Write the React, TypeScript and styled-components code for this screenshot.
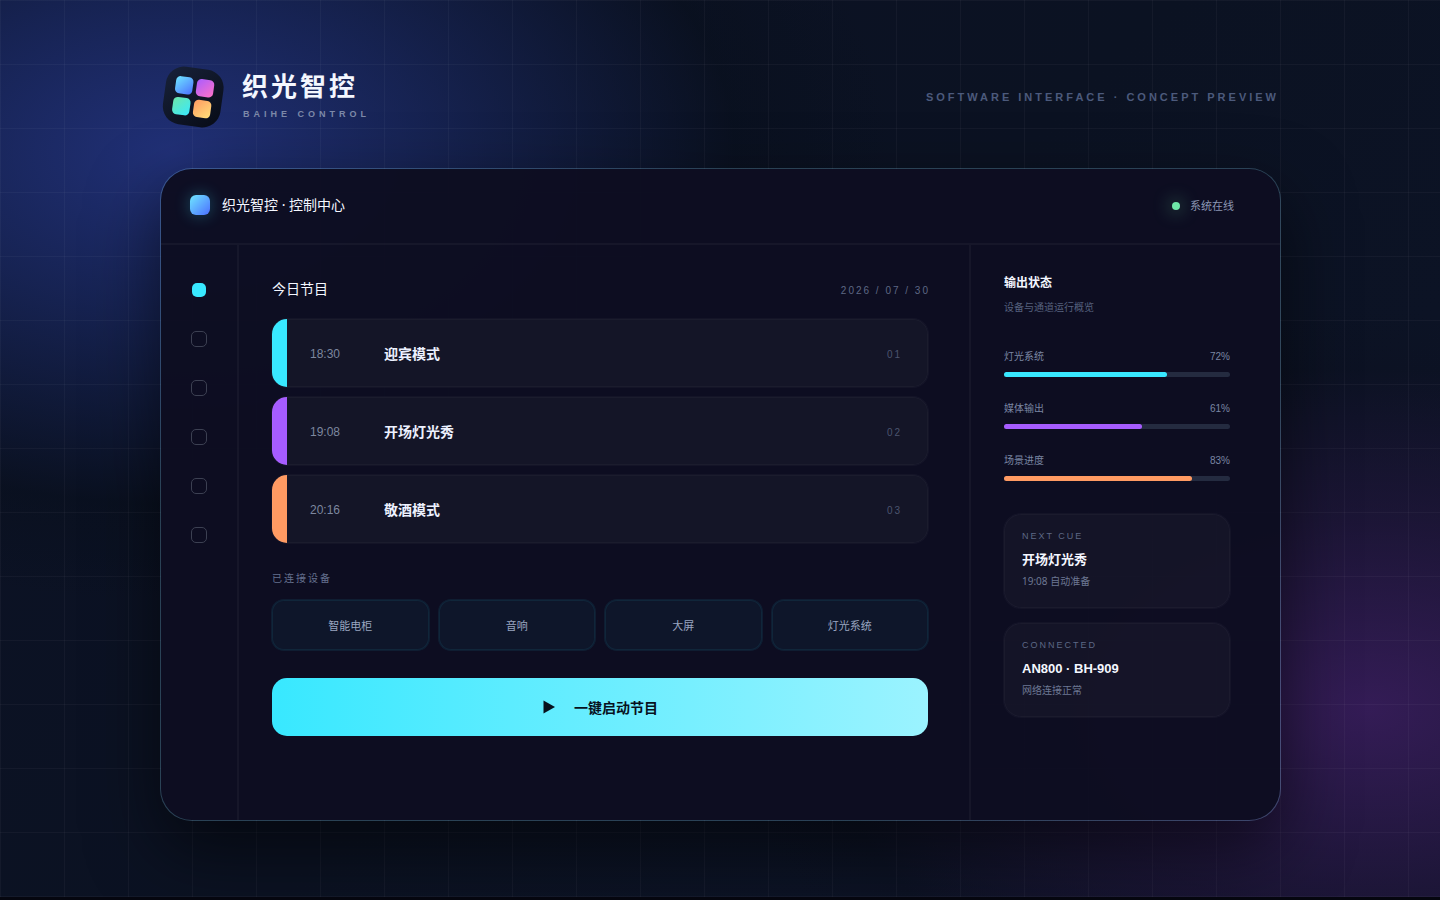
import React from "react";
import styled, { createGlobalStyle, css } from "styled-components";

const GlobalStyle = createGlobalStyle`
  *, *::before, *::after { box-sizing: border-box; }
  body {
    margin: 0;
    background: #05060f;
    font-family: "Liberation Sans", "Noto Sans CJK SC", sans-serif;
    color: #f4f7ff;
  }
  h1, h2, h3, p, ul, ol { margin: 0; padding: 0; font-weight: inherit; }
  ul, ol { list-style: none; }
  button { font-family: inherit; border: 0; padding: 0; cursor: pointer; }
`;

const softOutline = (color: string) => css`
  box-shadow: 0 0 0 1px ${color}, inset 0 0 0 1px ${color};
`;

const Stage = styled.div`
  min-height: calc(100vh - 3px);
  padding: 64px 159px 76px 160px;
  background:
    linear-gradient(rgba(255, 255, 255, 0.035) 1px, transparent 1px) 0 0 / 64px 64px,
    linear-gradient(90deg, rgba(255, 255, 255, 0.035) 1px, transparent 1px) 0 0 / 64px 64px,
    radial-gradient(
      ellipse 720px 450px at 12% 17%,
      rgba(38, 56, 140, 0.8),
      rgba(29, 45, 110, 0.62) 35%,
      rgba(8, 15, 28, 0.5) 78%,
      rgba(8, 14, 24, 0)
    ),
    radial-gradient(
      ellipse 640px 400px at 95% 79%,
      rgba(62, 30, 98, 0.8),
      rgba(36, 22, 62, 0.6) 50%,
      rgba(12, 14, 28, 0.2) 85%,
      rgba(10, 14, 26, 0)
    ),
    linear-gradient(135deg, #0c1226 0%, #0b1222 50%, #0d1428 100%);
`;

const Header = styled.header`
  display: flex;
  align-items: center;
  justify-content: space-between;
  height: 66px;
  margin-bottom: 38px;
  padding-right: 2px;
`;

const Brand = styled.div`
  display: flex;
  align-items: center;
  gap: 16px;
`;

const BrandText = styled.div`
  padding-bottom: 2px;
`;

const BrandName = styled.h1`
  font-size: 26px;
  line-height: 36px;
  font-weight: 700;
  letter-spacing: 3px;
`;

const BrandSub = styled.p`
  font-size: 9px;
  line-height: 18px;
  font-weight: 700;
  letter-spacing: 4px;
  padding-left: 1px;
  color: #7d89a8;
`;

const Tagline = styled.p`
  font-size: 11px;
  line-height: 16px;
  font-weight: 700;
  letter-spacing: 3px;
  color: #4c5a7c;
`;

const Window = styled.main`
  display: grid;
  grid-template-rows: 76px 1fr;
  min-height: 653px;
  border: 1px solid rgba(125, 190, 220, 0.28);
  border-radius: 32px;
  background: rgba(13, 13, 33, 0.97);
  background-clip: padding-box;
  box-shadow: 0 28px 70px rgba(0, 0, 0, 0.55);
  overflow: hidden;
`;

const TitleBar = styled.div`
  display: flex;
  align-items: center;
  justify-content: space-between;
  padding: 0 46px 2px 29px;
  border-bottom: 2px solid rgba(255, 255, 255, 0.04);
`;

const AppTitle = styled.h2`
  display: flex;
  align-items: center;
  gap: 12px;
  font-family: "Noto Sans", "Noto Sans CJK SC", sans-serif;
  font-size: 14px;
  line-height: 20px;
`;

const AppMark = styled.span`
  width: 20px;
  height: 20px;
  border-radius: 6px;
  background: linear-gradient(135deg, #6fe7ff, #4c6fff);
  box-shadow: 0 0 16px rgba(56, 232, 255, 0.3);
`;

const Status = styled.p`
  display: flex;
  align-items: center;
  gap: 10px;
  padding-top: 2px;
  font-size: 11px;
  line-height: 16px;
  color: #8b96b3;
`;

const StatusDot = styled.span`
  width: 8px;
  height: 8px;
  border-radius: 50%;
  background: #6ee7a8;
  box-shadow: 0 0 18px 2px rgba(110, 231, 168, 0.4);
`;

const Columns = styled.div`
  display: grid;
  grid-template-columns: 78px 1fr 311px;
`;

const Rail = styled.nav`
  display: flex;
  flex-direction: column;
  align-items: center;
  gap: 33px;
  padding-top: 37px;
  border-right: 2px solid rgba(255, 255, 255, 0.04);
`;

const RailButton = styled.button<{ $active?: boolean }>`
  width: 16px;
  height: 16px;
  border-radius: ${(p) => (p.$active ? "6px" : "5px")};
  border: 1px solid ${(p) => (p.$active ? "transparent" : "#3c4052")};
  background: ${(p) => (p.$active ? "#38e8ff" : "transparent")};
  background-clip: padding-box;
`;

const Program = styled.section`
  padding: 34px 41px 0 33px;
`;

const SectionHead = styled.div`
  display: flex;
  align-items: baseline;
  justify-content: space-between;
  height: 20px;
  margin-bottom: 20px;
`;

const SectionTitle = styled.h3`
  font-size: 14px;
  line-height: 20px;
`;

const DateText = styled.time`
  font-size: 10px;
  line-height: 16px;
  letter-spacing: 2px;
  margin-right: -2px;
  color: #5d6885;
`;

const CueList = styled.ol`
  display: grid;
  gap: 10px;
`;

const Cue = styled.li<{ $color: string }>`
  display: grid;
  grid-template-columns: 74px 1fr auto;
  align-items: center;
  height: 68px;
  padding: 2px 26px 0 38px;
  border-radius: 15px;
  background: linear-gradient(90deg, ${(p) => p.$color} 15px, #141527 15px);
  ${softOutline("rgba(255, 255, 255, 0.03)")}
`;

const CueTime = styled.time`
  font-size: 12px;
  line-height: 16px;
  color: #7d879f;
`;

const CueName = styled.span`
  font-size: 14px;
  line-height: 20px;
  font-weight: 700;
  color: #edf1ff;
`;

const CueIndex = styled.span`
  padding-top: 2px;
  font-size: 10px;
  line-height: 16px;
  letter-spacing: 2px;
  color: #4b546e;
`;

const DeviceLabel = styled.h3`
  margin: 28px 0 13px;
  font-size: 10px;
  line-height: 16px;
  letter-spacing: 2px;
  color: #65718f;
`;

const DeviceList = styled.ul`
  display: grid;
  grid-template-columns: repeat(4, 1fr);
  gap: 10px;
`;

const Device = styled.li`
  display: grid;
  place-items: center;
  height: 50px;
  padding-top: 2px;
  border-radius: 12px;
  background: #0e162a;
  font-size: 11px;
  line-height: 16px;
  color: #99a5c0;
  ${softOutline("rgba(56, 232, 255, 0.08)")}
`;

const StartButton = styled.button`
  display: flex;
  align-items: center;
  justify-content: center;
  gap: 18px;
  width: 100%;
  height: 58px;
  margin-top: 28px;
  border-radius: 15px;
  background: linear-gradient(90deg, #38e8ff, #9bf3ff);
  font-size: 14px;
  font-weight: 700;
  color: #07111d;
`;

const Side = styled.aside`
  padding: 28px 50px 0 33px;
  border-left: 2px solid rgba(255, 255, 255, 0.04);
`;

const SideTitle = styled.h3`
  font-size: 12px;
  line-height: 20px;
  font-weight: 700;
`;

const SideText = styled.p`
  margin-top: 7px;
  font-size: 10px;
  line-height: 16px;
  color: #56617e;
`;

const Meters = styled.div`
  display: grid;
  gap: 24px;
  margin: 33px 0;
`;

const MeterLabel = styled.div`
  display: flex;
  justify-content: space-between;
  margin-bottom: 7px;
  font-size: 10px;
  line-height: 16px;
  color: #7a86a3;
`;

const Track = styled.div`
  height: 5px;
  border-radius: 3px;
  background: #242b40;
`;

const Fill = styled.div<{ $color: string }>`
  height: 5px;
  border-radius: 3px;
  background: ${(p) => p.$color};
`;

const Cards = styled.div`
  display: grid;
  gap: 15px;
`;

const Card = styled.article`
  height: 94px;
  padding: 14px 18px;
  border-radius: 17px;
  background: rgba(255, 255, 255, 0.03);
  ${softOutline("rgba(255, 255, 255, 0.03)")}
`;

const CardLabel = styled.p`
  font-size: 9px;
  line-height: 16px;
  letter-spacing: 2px;
  color: #5d6885;
`;

const CardTitle = styled.h3`
  margin-top: 6px;
  font-size: 13px;
  line-height: 20px;
  font-weight: 700;
`;

const CardText = styled.p`
  margin-top: 3px;
  font-family: "Noto Sans", "Noto Sans CJK SC", sans-serif;
  font-size: 10px;
  line-height: 16px;
  color: #6d7893;
`;

const Logo = () => (
  <svg width="66" height="66" viewBox="0 0 66 66" aria-hidden="true">
    <defs>
      <linearGradient id="base" x1="0" y1="0" x2="1" y2="1">
        <stop stopColor="#18223a" />
        <stop offset="1" stopColor="#070b16" />
      </linearGradient>
      <linearGradient id="blue" x1="0" y1="0" x2="1" y2="1">
        <stop stopColor="#6fe7ff" />
        <stop offset="1" stopColor="#4c6fff" />
      </linearGradient>
      <linearGradient id="pink" x1="0" y1="0" x2="1" y2="1">
        <stop stopColor="#a95cff" />
        <stop offset="1" stopColor="#ff72c7" />
      </linearGradient>
      <linearGradient id="green" x1="0" y1="0" x2="1" y2="1">
        <stop stopColor="#6ee7a8" />
        <stop offset="1" stopColor="#38e8ff" />
      </linearGradient>
      <linearGradient id="gold" x1="0" y1="0" x2="1" y2="1">
        <stop stopColor="#ff9a62" />
        <stop offset="1" stopColor="#ffe07a" />
      </linearGradient>
    </defs>
    <g transform="translate(33.2 33) rotate(8)">
      <rect x="-29" y="-29" width="58" height="58" rx="18" fill="url(#base)" />
      <rect x="-19.2" y="-19" width="17.4" height="17.4" rx="4.5" fill="url(#blue)" />
      <rect x="1.8" y="-19" width="17.4" height="17.4" rx="4.5" fill="url(#pink)" />
      <rect x="-19.2" y="2" width="17.4" height="17.4" rx="4.5" fill="url(#green)" />
      <rect x="1.8" y="2" width="17.4" height="17.4" rx="4.5" fill="url(#gold)" />
    </g>
  </svg>
);

const PlayIcon = () => (
  <svg width="14" height="14" viewBox="0 0 14 14" aria-hidden="true">
    <path d="M1.5 0.5L13 7L1.5 13.5Z" fill="#07111d" />
  </svg>
);

const rail = ["节目", "灯光", "媒体", "场景", "设备", "设置"];
const cues = [
  { time: "18:30", name: "迎宾模式", index: "01", color: "#38e8ff" },
  { time: "19:08", name: "开场灯光秀", index: "02", color: "#a65cff" },
  { time: "20:16", name: "敬酒模式", index: "03", color: "#ff9a62" },
];
const devices = ["智能电柜", "音响", "大屏", "灯光系统"];
const meters = [
  { name: "灯光系统", value: 72, color: "#38e8ff" },
  { name: "媒体输出", value: 61, color: "#a65cff" },
  { name: "场景进度", value: 83, color: "#ff9a62" },
];
const cards = [
  { label: "NEXT CUE", title: "开场灯光秀", text: "19:08 自动准备" },
  { label: "CONNECTED", title: "AN800 · BH-909", text: "网络连接正常" },
];

export default function App() {
  return (
    <>
      <GlobalStyle />
      <Stage>
        <Header>
          <Brand>
            <Logo />
            <BrandText>
              <BrandName>织光智控</BrandName>
              <BrandSub>BAIHE CONTROL</BrandSub>
            </BrandText>
          </Brand>
          <Tagline>SOFTWARE INTERFACE · CONCEPT PREVIEW</Tagline>
        </Header>
        <Window>
          <TitleBar>
            <AppTitle>
              <AppMark />
              织光智控 · 控制中心
            </AppTitle>
            <Status>
              <StatusDot />
              系统在线
            </Status>
          </TitleBar>
          <Columns>
            <Rail>
              {rail.map((label, i) => (
                <RailButton key={label} type="button" aria-label={label} $active={i === 0} />
              ))}
            </Rail>
            <Program>
              <SectionHead>
                <SectionTitle>今日节目</SectionTitle>
                <DateText dateTime="2026-07-30">2026 / 07 / 30</DateText>
              </SectionHead>
              <CueList>
                {cues.map((cue) => (
                  <Cue key={cue.index} $color={cue.color}>
                    <CueTime>{cue.time}</CueTime>
                    <CueName>{cue.name}</CueName>
                    <CueIndex>{cue.index}</CueIndex>
                  </Cue>
                ))}
              </CueList>
              <DeviceLabel>已连接设备</DeviceLabel>
              <DeviceList>
                {devices.map((device) => (
                  <Device key={device}>{device}</Device>
                ))}
              </DeviceList>
              <StartButton type="button">
                <PlayIcon />
                一键启动节目
              </StartButton>
            </Program>
            <Side>
              <SideTitle>输出状态</SideTitle>
              <SideText>设备与通道运行概览</SideText>
              <Meters>
                {meters.map((meter) => (
                  <div key={meter.name}>
                    <MeterLabel>
                      <span>{meter.name}</span>
                      <span>{meter.value}%</span>
                    </MeterLabel>
                    <Track>
                      <Fill $color={meter.color} style={{ width: `${meter.value}%` }} />
                    </Track>
                  </div>
                ))}
              </Meters>
              <Cards>
                {cards.map((card) => (
                  <Card key={card.label}>
                    <CardLabel>{card.label}</CardLabel>
                    <CardTitle>{card.title}</CardTitle>
                    <CardText>{card.text}</CardText>
                  </Card>
                ))}
              </Cards>
            </Side>
          </Columns>
        </Window>
      </Stage>
    </>
  );
}
